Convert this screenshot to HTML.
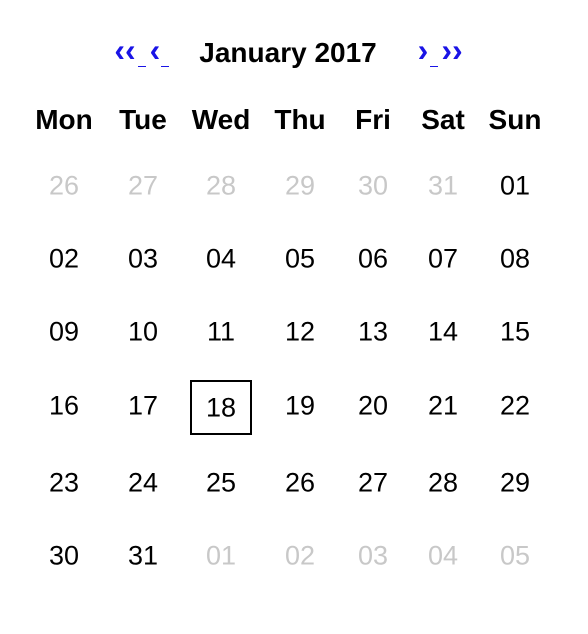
<!DOCTYPE html><html><head><style>
body{margin:0;width:588px;height:634px;background:#fff;font-family:"Liberation Sans",Arial,sans-serif;position:relative;overflow:hidden}
.t{position:absolute;transform:translate(-50%,-50%);white-space:nowrap;font-size:27px;line-height:1}
.h{font-weight:bold;font-size:28px}
.g{color:#c8c8c8}
.n{color:#1a14e6;font-weight:bold;font-size:32px}
.u{position:absolute;height:1px;background:#1a14e6;width:8px}
.box{position:absolute;left:190px;top:380px;width:62px;height:55px;border:2px solid #000;box-sizing:border-box}
</style></head><body>
<div class="t n" style="left:125px;top:50px">‹‹</div>
<div class="u" style="left:138px;top:66px"></div>
<div class="t n" style="left:155px;top:50px">‹</div>
<div class="u" style="left:161px;top:66px"></div>
<div class="t h" style="left:288px;top:53px">January 2017</div>
<div class="t n" style="left:423px;top:50px">›</div>
<div class="u" style="left:430px;top:66px"></div>
<div class="t n" style="left:452px;top:50px">››</div>
<div class="box"></div>
<div id="c"></div>
<script>
var xs=[64,143,221,300,373,443,515],ys=[186,259,332,406,483,556];
var hd=["Mon","Tue","Wed","Thu","Fri","Sat","Sun"],h="";
hd.forEach(function(s,i){h+='<div class="t h" style="left:'+xs[i]+'px;top:120px">'+s+'</div>'});
var d=[26,27,28,29,30,31];for(var i=1;i<=31;i++)d.push(i);for(i=1;i<=5;i++)d.push(i);
d.forEach(function(v,k){var r=Math.floor(k/7),c=k%7,g=(k<6||k>36);
var y=ys[r]+(k==23?2:0);
h+='<div class="t'+(g?' g':'')+'" style="left:'+xs[c]+'px;top:'+y+'px">'+(v<10?'0'+v:v)+'</div>'});
document.getElementById('c').innerHTML=h;
</script>
</body></html>
